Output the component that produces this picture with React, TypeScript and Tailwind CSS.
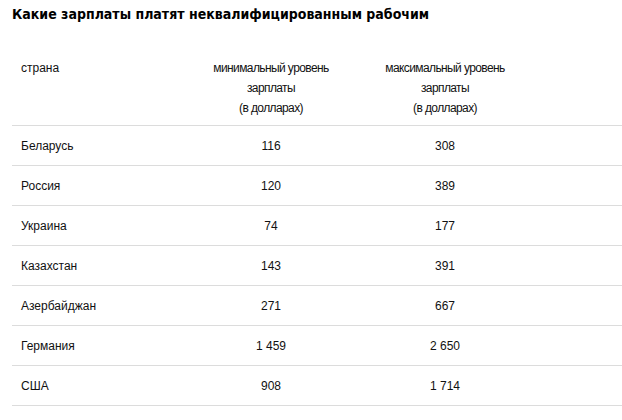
import React from "react";

const rows: [string, string, string][] = [
  ["Беларусь", "116", "308"],
  ["Россия", "120", "389"],
  ["Украина", "74", "177"],
  ["Казахстан", "143", "391"],
  ["Азербайджан", "271", "667"],
  ["Германия", "1 459", "2 650"],
  ["США", "908", "1 714"],
];

const cols = "grid grid-cols-[172px_174px_174px_1fr]";

export default function App() {
  return (
    <div className="w-[622px] h-[420px] bg-white text-[#111] font-['Liberation_Sans',Arial,sans-serif]">
      <h1 className="pl-[12px] pt-[4px] h-[50px] text-[14px] leading-[20px] font-bold font-['DejaVu_Sans_Condensed','DejaVu_Sans',sans-serif] text-black">
        Какие зарплаты платят неквалифицированным рабочим
      </h1>
      <div className="ml-[12px]">
        <div className={`${cols} border-b border-[#dcdcdc] pt-[8px] pb-[7px] text-[12px] leading-[20px] tracking-[-0.6px]`}>
          <div className="pl-[9px] tracking-normal">страна</div>
          <div className="text-center">
            минимальный уровень
            <br />
            зарплаты
            <br />
            (в долларах)
          </div>
          <div className="text-center">
            максимальный уровень
            <br />
            зарплаты
            <br />
            (в долларах)
          </div>
          <div />
        </div>
        {rows.map(([country, min, max]) => (
          <div
            key={country}
            className={`${cols} h-[40px] items-center border-b border-[#dcdcdc] text-[12px] leading-[20px]`}
          >
            <div className="pl-[9px]">{country}</div>
            <div className="text-center">{min}</div>
            <div className="text-center">{max}</div>
            <div />
          </div>
        ))}
      </div>
    </div>
  );
}
